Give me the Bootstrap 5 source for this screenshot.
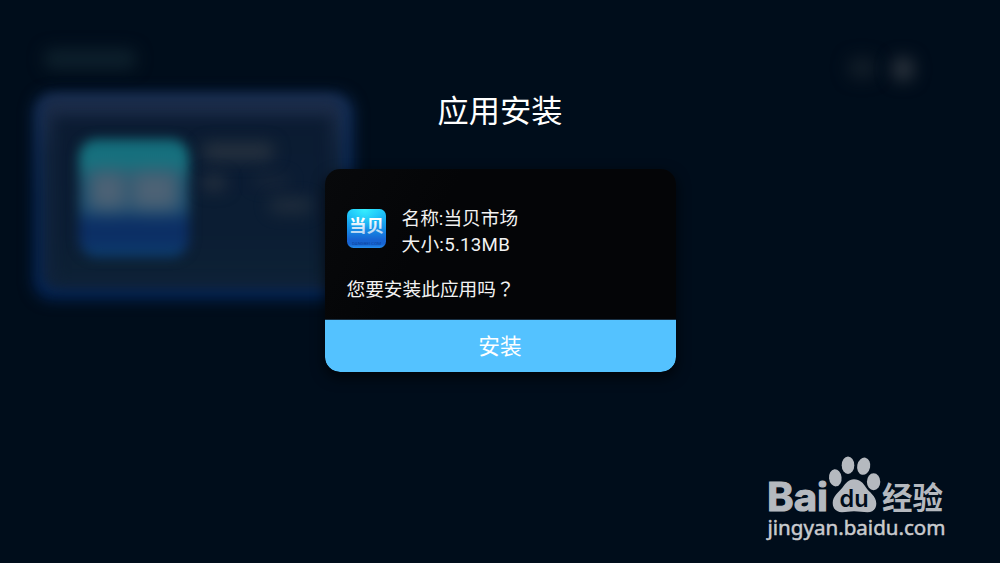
<!DOCTYPE html>
<html lang="zh-CN">
<head>
<meta charset="utf-8">
<meta name="viewport" content="width=device-width, initial-scale=1">
<title>应用安装</title>
<link href="https://cdn.jsdelivr.net/npm/bootstrap@5.3.0/dist/css/bootstrap.min.css" rel="stylesheet">
<style>
  body { background: #000d1b; font-family: Roboto, "Noto Sans CJK SC", sans-serif; }
  .screen { width: 1000px; height: 563px; }
  .backdrop-layer { z-index: 0; padding: 49px 86px 0 34px; }
  .backdrop-head { height: 45px; padding-left: 10px; }
  .ghost { border-radius: 8px; filter: blur(8px); }
  .ghost-title { width: 92px; height: 20px; background: #0d202c; }
  .ghost-page { width: 28px; height: 22px; background: #101c27; }
  .ghost-dot { width: 22px; height: 24px; background: #27303a; }
  .focus-tile { width: 319px; height: 205px; border-radius: 16px; }
  .tile-glow { border-radius: 18px; background: linear-gradient(#152f57, #072550 50%, #042454); filter: blur(7px); box-shadow: 0 0 5px #03204c; }
  .tile-frame { inset: 3px 11px 10px 8px; border-radius: 14px; background: linear-gradient(#1d2d4a, #12243d 30%, #10233d); filter: blur(6px); }
  .tile-face { inset: 23px 22px 17px 20px; background: linear-gradient(#0b1b32, #0b1d33 70%, #0d2135); filter: blur(7px); }
  .tile-content { padding: 45px 16px 0 45px; gap: 13px; }
  .tile-icon { width: 110px; height: 118px; border-radius: 18px; background: linear-gradient(#146b7a, #177380 20%, #17536f 38%, #174a70 58%, #0c2f65 72%, #0c2f65 86%, #0d4171); filter: blur(6px); }
  .tile-icon i { background: #4d6275; height: 39px; filter: blur(7px); }
  .tile-lines .ghost { background: #27323f; }
  .dialog-title { font-size: 31.2px; line-height: 40px; padding-top: 92px; margin-bottom: 37px; text-align: center; color: #fff; }
  .install-box { width: 351px; height: 203px; border-radius: 15px; background: linear-gradient(120deg, #08090b, #040507 30%, #040507); box-shadow: 0 5px 14px rgba(0,0,0,.7); color: #f2f2f2; }
  .install-body { height: 150px; padding: 36px 22px 0; }
  .app-icon { width: 39px; height: 39px; margin-top: 4px; }
  .app-info { font-size: 18.7px; line-height: 26px; margin-left: 16px; padding-top: 1px; }
  .app-size { letter-spacing: .25px; }
  .ask { font-size: 18.7px; line-height: 26px; margin-top: 19px; }
  .wide-mark { font-family: "Noto Sans CJK TC", sans-serif; line-height: 1; }
  .install-btn { height: 53px; border-top: 1px solid #183044; border-radius: 0 0 15px 15px; background: #54c2ff; color: #fff; font-size: 21.7px; line-height: 52px; padding: 1px 0 0; }
  .watermark { right: 50px; bottom: 8px; width: 190px; height: 105px; }
</style>
</head>
<body class="m-0 overflow-hidden">
<main class="screen position-relative overflow-hidden">
  <div class="backdrop-layer position-absolute top-0 start-0 w-100 h-100" aria-hidden="true">
    <div class="backdrop-head d-flex justify-content-between">
      <div class="ghost ghost-title"></div>
      <div class="d-flex gap-3 pt-2">
        <div class="ghost ghost-page"></div>
        <div class="ghost ghost-dot"></div>
      </div>
    </div>
    <div class="focus-tile position-relative">
      <div class="tile-glow position-absolute w-100 h-100"></div>
      <div class="tile-frame position-absolute"></div>
      <div class="tile-face position-absolute"></div>
      <div class="tile-content position-relative d-flex">
        <div class="tile-icon d-flex align-items-center justify-content-center gap-1 pb-3">
          <i style="width:38px"></i><i style="width:48px"></i>
        </div>
        <div class="tile-lines flex-fill pt-1">
          <div class="ghost mb-3" style="width:72px;height:17px"></div>
          <div class="d-flex justify-content-between pe-5 mb-2">
            <div class="ghost" style="width:24px;height:14px"></div>
            <div class="ghost opacity-50" style="width:36px;height:10px"></div>
          </div>
          <div class="ghost ms-auto me-4 opacity-75" style="width:44px;height:15px"></div>
        </div>
      </div>
    </div>
  </div>

  <section class="position-relative d-flex flex-column align-items-center">
    <h1 class="dialog-title fw-normal">应用安装</h1>
    <div class="install-box overflow-hidden">
      <div class="install-body">
        <div class="d-flex">
          <svg class="app-icon flex-shrink-0" viewBox="0 0 39 39">
            <defs>
              <linearGradient id="iconFill" x2="0" y2="1"><stop stop-color="#20cafa"/><stop offset=".45" stop-color="#1598ec"/><stop offset=".78" stop-color="#1764d2"/><stop offset=".9" stop-color="#1764d2"/><stop offset="1" stop-color="#2490f0"/></linearGradient>
              <radialGradient id="iconShine" cx=".45" cy="0" r=".55"><stop stop-color="#37f0ff"/><stop offset="1" stop-color="#28dcff" stop-opacity="0"/></radialGradient>
              <linearGradient id="iconText" x2="0" y2="1"><stop offset=".2" stop-color="#fff"/><stop offset="1" stop-color="#a5cdf0"/></linearGradient>
            </defs>
            <rect width="39" height="39" rx="6.5" fill="url(#iconFill)"/>
            <rect width="39" height="39" rx="6.5" fill="url(#iconShine)"/>
            <text x="2" y="23" font-size="17.5" font-weight="700" textLength="35" lengthAdjust="spacingAndGlyphs" fill="url(#iconText)">当贝</text>
            <text x="5" y="35.500" font-size="4" textLength="29" lengthAdjust="spacingAndGlyphs" fill="#0b429d">DANGBEI.COM</text>
          </svg>
          <div class="app-info">
            <div>名称:当贝市场</div>
            <div class="app-size">大小:5.13MB</div>
          </div>
        </div>
        <div class="ask">您要安装此应用吗<span class="wide-mark" lang="zh-TW">？</span></div>
      </div>
      <button type="button" class="install-btn btn w-100 border-start-0 border-end-0 border-bottom-0">安装</button>
    </div>
  </section>

  <svg class="watermark position-absolute" viewBox="760 450 190 105" fill="#b5b9bf">
    <text x="767" y="511" font-family="Inter, sans-serif" font-weight="700" font-size="39" textLength="61" lengthAdjust="spacingAndGlyphs" stroke="#b5b9bf" stroke-width="1.2">Bai</text>
    <ellipse cx="835.3" cy="477.8" rx="6.3" ry="8.6" transform="rotate(-6 835.3 477.8)"/>
    <ellipse cx="848" cy="465.2" rx="6.3" ry="8.7"/>
    <ellipse cx="863.7" cy="466.2" rx="6.5" ry="8.7" transform="rotate(12 863.7 466.2)"/>
    <ellipse cx="873.6" cy="481.7" rx="6.7" ry="8.5"/>
    <path d="M854 479.200c6 0 9 3.600 12 8.300 3 4.600 10.300 8.500 10.300 16 0 5.600-3.500 8.700-8.800 8.700-4.500 0-8.500-1-13.500-1s-7.500 1-12 1c-5.500 0-9.300-3.500-9.300-9.300 0-7 6.300-11 10-15.700 3-4 6-8 11.300-8z"/>
    <text x="839.500" y="507" font-family="Inter, sans-serif" font-weight="600" font-size="24" textLength="29" lengthAdjust="spacingAndGlyphs" fill="#000d1b">du</text>
    <text x="882" y="508.500" font-size="30.500" font-weight="700" textLength="61" lengthAdjust="spacingAndGlyphs">经验</text>
    <text x="767.500" y="535" font-family="Noto Sans, sans-serif" font-size="20.500" textLength="178" lengthAdjust="spacingAndGlyphs" fill="#c9cbce" stroke="#c9cbce" stroke-width=".5">jingyan.baidu.com</text>
  </svg>
</main>
<script src="https://cdn.jsdelivr.net/npm/bootstrap@5.3.0/dist/js/bootstrap.bundle.min.js"></script>
</body>
</html>
